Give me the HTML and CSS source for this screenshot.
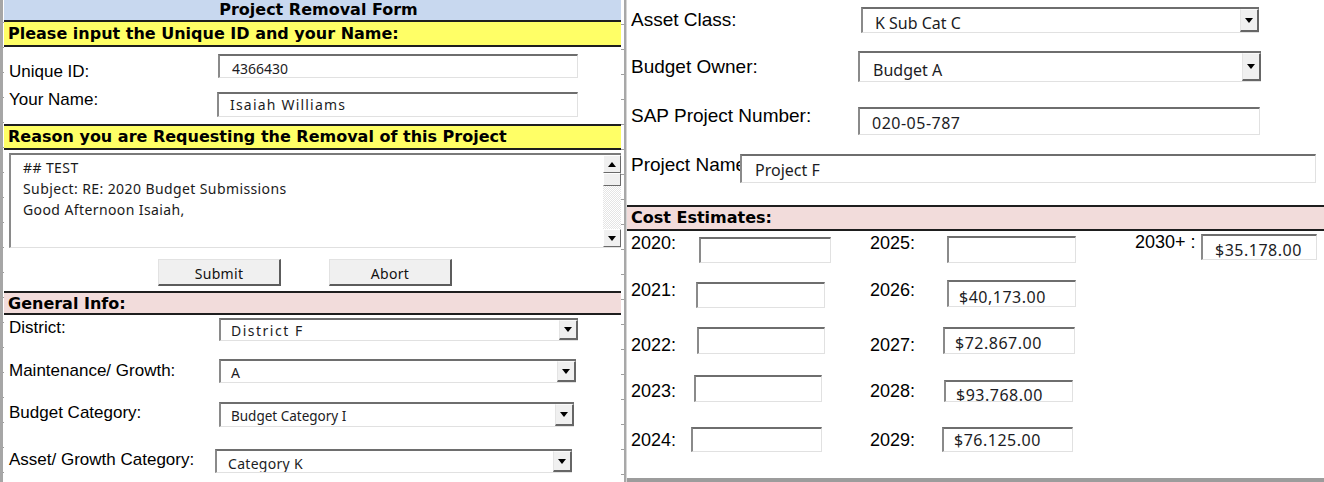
FILE: index.html
```html
<!DOCTYPE html>
<html>
<head>
<meta charset="utf-8">
<title>Project Removal Form</title>
<link rel="stylesheet" href="styles.css">
</head>
<body>
<div class="screen">
  <div class="edge"></div>
  <div class="left">
    <div class="title">Project Removal Form</div>
    <div class="band yellow first">Please input the Unique ID and your Name:</div>
    <div class="idblock">
      <div class="row row-id">
        <span class="lbl">Unique ID:</span>
        <div class="field f-id">4366430</div>
      </div>
      <div class="row row-name">
        <span class="lbl">Your Name:</span>
        <div class="field f-name">Isaiah Williams</div>
      </div>
    </div>
    <div class="band yellow second">Reason you are Requesting the Removal of this Project</div>
    <div class="memo">
      <div class="memo-text">
        <div>## TEST</div>
        <div>Subject: RE: 2020 Budget Submissions</div>
        <div>Good Afternoon Isaiah,</div>
      </div>
      <div class="vscroll">
        <div class="sbtn"><span class="tri up"></span></div>
        <div class="thumb"></div>
        <div class="track"></div>
        <div class="sbtn"><span class="tri down"></span></div>
      </div>
    </div>
    <div class="actions">
      <div class="btn">Submit</div>
      <div class="btn">Abort</div>
    </div>
    <div class="band pink">General Info:</div>
    <div class="row g-district">
      <span class="lbl">District:</span>
      <div class="field select"><span class="val v-district">District F</span><span class="drop"><span class="tri down"></span></span></div>
    </div>
    <div class="row g-maint">
      <span class="lbl">Maintenance/ Growth:</span>
      <div class="field select"><span class="val v-maint">A</span><span class="drop"><span class="tri down"></span></span></div>
    </div>
    <div class="row g-budget">
      <span class="lbl">Budget Category:</span>
      <div class="field select"><span class="val v-budget">Budget Category I</span><span class="drop"><span class="tri down"></span></span></div>
    </div>
    <div class="row g-asset">
      <span class="lbl">Asset/ Growth Category:</span>
      <div class="field select"><span class="val v-asset">Category K</span><span class="drop"><span class="tri down"></span></span></div>
    </div>
  </div>
  <div class="divider"></div>
  <div class="right">
    <div class="rrow r-asset">
      <span class="rlbl">Asset Class:</span>
      <div class="field select"><span class="val v-class">K Sub Cat C</span><span class="drop"><span class="tri down"></span></span></div>
    </div>
    <div class="rrow r-owner">
      <span class="rlbl">Budget Owner:</span>
      <div class="field select"><span class="val v-owner">Budget A</span><span class="drop"><span class="tri down"></span></span></div>
    </div>
    <div class="rrow r-sap">
      <span class="rlbl">SAP Project Number:</span>
      <div class="field f-sap">020-05-787</div>
    </div>
    <div class="rrow r-pname">
      <span class="rlbl">Project Name</span>
      <div class="field f-pname">Project F</div>
    </div>
    <div class="band pink cost-band">Cost Estimates:</div>
    <div class="cost">
      <div class="crow c1">
        <div class="cell a"><span class="ylab">2020:</span><div class="cbox b20"></div></div>
        <div class="cell b"><span class="ylab">2025:</span><div class="cbox b25"></div></div>
        <div class="cell c"><span class="ylab">2030+ :</span><div class="cbox b30">$35.178.00</div></div>
      </div>
      <div class="crow c2">
        <div class="cell a"><span class="ylab">2021:</span><div class="cbox b21"></div></div>
        <div class="cell b"><span class="ylab">2026:</span><div class="cbox b26">$40,173.00</div></div>
      </div>
      <div class="crow c3">
        <div class="cell a"><span class="ylab">2022:</span><div class="cbox b22"></div></div>
        <div class="cell b"><span class="ylab">2027:</span><div class="cbox b27">$72.867.00</div></div>
      </div>
      <div class="crow c4">
        <div class="cell a"><span class="ylab">2023:</span><div class="cbox b23"></div></div>
        <div class="cell b"><span class="ylab">2028:</span><div class="cbox b28">$93.768.00</div></div>
      </div>
      <div class="crow c5">
        <div class="cell a"><span class="ylab">2024:</span><div class="cbox b24"></div></div>
        <div class="cell b"><span class="ylab">2029:</span><div class="cbox b29">$76.125.00</div></div>
      </div>
    </div>
  </div>
</div>
</body>
</html>
```

FILE: styles.css
```css
* { box-sizing: border-box; }
html, body { margin: 0; padding: 0; background: #fff; }
body {
  width: 1324px;
  height: 482px;
  overflow: hidden;
  font-family: "Liberation Sans", Arial, sans-serif;
  color: #000;
}
.screen { display: flex; height: 482px; }

/* spreadsheet edges behind the form */
.edge {
  width: 4px;
  flex: none;
  background:
    linear-gradient(to right, #a6a6a6 0 3px, transparent 3px),
    repeating-linear-gradient(to bottom, transparent 0 22px, #9a9a9a 22px 23px, transparent 23px 25px);
}
.divider {
  width: 6px;
  flex: none;
  background:
    linear-gradient(to right, transparent 0 3px, #a8a8a8 3px 5px, #d6d6d6 5px 6px),
    repeating-linear-gradient(to bottom, transparent 0 24px, #9e9e9e 24px 25px) 0 0 / 3px 100% no-repeat;
}

/* left panel */
.left {
  width: 617px;
  flex: none;
  display: flex;
  flex-direction: column;
}
.title {
  height: 22px;
  flex: none;
  background: #c8d8ef;
  border-bottom: 2px solid #1e1e1e;
  text-align: center;
  padding-left: 12px;
  font: bold 16px/20px "DejaVu Sans", sans-serif;
}
.band {
  flex: none;
  font: bold 16px "DejaVu Sans", sans-serif;
  padding-left: 4px;
  border-bottom: 2px solid #1e1e1e;
  white-space: nowrap;
}
.yellow { background: #ffff66; }
.pink { background: #f2dcdb; }
.band.first { height: 25px; line-height: 23px; }
.band.second { height: 26px; line-height: 22px; border-top: 2px solid #1e1e1e; }
.band.pink { height: 24px; line-height: 20px; padding-top: 1px; border-top: 2px solid #1e1e1e; }

.idblock { height: 77px; flex: none; }

.row {
  display: flex;
  align-items: flex-start;
  padding-left: 5px;
  flex: none;
}
.lbl {
  font-size: 17px;
  line-height: 20px;
  white-space: nowrap;
  flex: none;
}

.field {
  flex: none;
  background: #fff;
  border-top: 2px solid #6e6e6e;
  border-left: 2px solid #8a8a8a;
  border-right: 1px solid #e1e1e1;
  border-bottom: 1px solid #e1e1e1;
  font-family: "Noto Sans", "Open Sans", sans-serif;
  font-size: 14px;
  line-height: 16px;
  color: #1c1c24;
  white-space: nowrap;
  overflow: hidden;
  padding-left: 12px;
}
.field.select {
  display: flex;
  padding-left: 0;
  border-right: 0;
}
.val {
  flex: 1;
  padding-left: 10px;
  padding-top: 4px;
  overflow: hidden;
}
.drop {
  width: 19px;
  flex: none;
  background: #f0f0f0;
  border-top: 1px solid #fafafa;
  border-left: 1px solid #e4e4e4;
  border-right: 2px solid #666;
  border-bottom: 2px solid #666;
  display: flex;
  align-items: center;
  justify-content: center;
}
.tri { width: 0; height: 0; border-left: 4px solid transparent; border-right: 4px solid transparent; }
.tri.down { border-top: 5px solid #000; }
.tri.up { border-bottom: 5px solid #000; }

.row-id { margin-top: 7px; height: 24px; }
.row-id .lbl { width: 209px; margin-top: 8px; }
.f-id { width: 360px; height: 24px; padding-top: 5px; padding-left: 12px; }
.row-name { margin-top: 14px; height: 25px; }
.row-name .lbl { width: 208px; margin-top: -2px; }
.f-name { width: 361px; height: 25px; padding-top: 3px; padding-left: 11px; letter-spacing: 1.2px; }

/* memo */
.memo {
  flex: none;
  margin: 3px 0 0 5px;
  width: 612px;
  height: 95px;
  display: flex;
  border-top: 2px solid #7a7a7a;
  border-left: 2px solid #8a8a8a;
  border-bottom: 1px solid #e0e0e0;
}
.memo-text {
  flex: 1;
  padding: 2px 0 0 12px;
  font-family: "Noto Sans", "Open Sans", sans-serif;
  font-size: 14px;
  line-height: 21px;
  letter-spacing: 0.4px;
  color: #1a1a1a;
}
.vscroll { width: 18px; flex: none; display: flex; flex-direction: column; }
.sbtn, .thumb {
  flex: none;
  background: #f0f0f0;
  border-top: 1px solid #fff;
  border-left: 1px solid #fff;
  border-right: 1px solid #6a6a6a;
  border-bottom: 1px solid #6a6a6a;
  display: flex;
  align-items: center;
  justify-content: center;
}
.sbtn { height: 18px; }
.thumb { height: 13px; }
.track {
  flex: 1;
  background: repeating-conic-gradient(#ffffff 0 25%, #e4e4e4 0 50%) 0 0 / 2px 2px;
}

/* buttons */
.actions {
  flex: none;
  height: 43px;
  display: flex;
  gap: 48px;
  padding: 11px 0 0 154px;
}
.btn {
  width: 123px;
  height: 27px;
  background: #f0f0f0;
  border-top: 1px solid #e2e2e2;
  border-left: 1px solid #e2e2e2;
  border-right: 2px solid #5c5c5c;
  border-bottom: 2px solid #5c5c5c;
  text-align: center;
  padding-top: 3px;
  font-family: "Noto Sans", "Open Sans", sans-serif;
  font-size: 14px;
  line-height: 22px;
  letter-spacing: 0.3px;
  color: #111;
}

/* general info rows */
.g-district { margin-top: 3px; height: 23px; }
.g-district .lbl { width: 210px; margin-top: 0; }
.g-district .field { width: 359px; height: 23px; }
.v-district { padding-top: 3px; letter-spacing: 1.5px; }

.g-maint { margin-top: 18px; height: 24px; }
.g-maint .lbl { width: 210px; margin-top: 2px; }
.g-maint .field { width: 357px; height: 24px; }
.v-maint { padding-top: 4px; }

.g-budget { margin-top: 19px; height: 25px; }
.g-budget .lbl { width: 210px; margin-top: 1px; }
.g-budget .field { width: 355px; height: 25px; }
.v-budget { padding-top: 4px; font-size: 13.5px; }

.g-asset { margin-top: 22px; height: 24px; }
.g-asset .lbl { width: 206px; margin-top: 1px; }
.g-asset .field { width: 357px; height: 24px; }
.v-asset { padding-top: 5px; padding-left: 11px; letter-spacing: 0.3px; }

/* right panel */
.right {
  flex: 1;
  height: 482px;
  display: flex;
  flex-direction: column;
  border-bottom: 4px solid #9c9c9c;
}
.rrow {
  flex: none;
  display: flex;
  align-items: flex-start;
  padding-left: 4px;
}
.rlbl {
  flex: none;
  font-size: 19px;
  line-height: 22px;
  white-space: nowrap;
  overflow: hidden;
}
.rrow .field { font-size: 16px; line-height: 18px; }

.r-asset { margin-top: 7px; height: 26px; }
.r-asset .rlbl { width: 230px; margin-top: 2px; }
.r-asset .field { width: 398px; height: 26px; }
.v-class { padding-top: 5px; padding-left: 12px; }

.r-owner { margin-top: 18px; height: 31px; }
.r-owner .rlbl { width: 227px; margin-top: 5px; }
.r-owner .field { width: 403px; height: 31px; }
.v-owner { padding-top: 8px; padding-left: 13px; }

.r-sap { margin-top: 25px; height: 28px; }
.r-sap .rlbl { width: 227px; margin-top: -2px; }
.f-sap { width: 402px; height: 28px; padding-top: 5px; padding-left: 12px; letter-spacing: 0.5px; }

.r-pname { margin-top: 19px; height: 29px; }
.r-pname .rlbl { width: 109px; margin-top: 0; }
.f-pname { width: 576px; height: 29px; padding-top: 5px; padding-left: 13px; }

.band.cost-band {
  margin-top: 22px;
  height: 26px;
  line-height: 22px;
  padding-top: 0;
}

.cost { display: flex; flex-direction: column; padding-left: 4px; flex: none; }
.crow { display: flex; align-items: flex-start; flex: none; }
.c1 { height: 46px; }
.c2 { height: 45px; }
.c3 { height: 48px; }
.c4 { height: 50px; }
.c5 { height: 50px; }
.cell { display: flex; align-items: flex-start; flex: none; }
.cell.a { width: 239px; }
.cell.b { width: 265px; }
.ylab {
  flex: none;
  font-size: 18px;
  line-height: 21px;
  white-space: nowrap;
}
.cell.a .ylab { width: 60px; }
.cell.b .ylab { width: 72px; }
.cell.c .ylab { width: 66px; margin-top: 1px; }
.c1 .ylab { margin-top: 2px; }
.c2 .ylab { margin-top: 3px; }
.c3 .ylab { margin-top: 13px; }
.c4 .ylab { margin-top: 11px; }
.c5 .ylab { margin-top: 10px; }

.cbox {
  flex: none;
  background: #fff;
  border-top: 2px solid #6e6e6e;
  border-left: 2px solid #8a8a8a;
  border-right: 1px solid #e1e1e1;
  border-bottom: 1px solid #e1e1e1;
  font-family: "Noto Sans", "Open Sans", sans-serif;
  font-size: 16px;
  line-height: 18px;
  letter-spacing: 0.5px;
  color: #1c1c24;
  white-space: nowrap;
  overflow: hidden;
  padding-left: 10px;
}
.b20 { margin: 6px 0 0 8px; width: 132px; height: 26px; }
.b21 { margin: 5px 0 0 5px; width: 129px; height: 26px; }
.b22 { margin: 5px 0 0 6px; width: 128px; height: 27px; }
.b23 { margin: 5px 0 0 3px; width: 128px; height: 27px; }
.b24 { margin: 7px 0 0 0; width: 131px; height: 25px; }
.b25 { margin: 5px 0 0 5px; width: 129px; height: 27px; }
.b26 { margin: 3px 0 0 5px; width: 129px; height: 27px; padding-top: 6px; }
.b27 { margin: 5px 0 0 1px; width: 132px; height: 27px; padding-top: 5px; }
.b28 { margin: 10px 0 0 2px; width: 129px; height: 22px; padding-top: 4px; }
.b29 { margin: 7px 0 0 0; width: 131px; height: 25px; padding-top: 2px; }
.b30 { margin: 3px 0 0 0; width: 116px; height: 26px; padding-top: 5px; padding-left: 12px; }
```
